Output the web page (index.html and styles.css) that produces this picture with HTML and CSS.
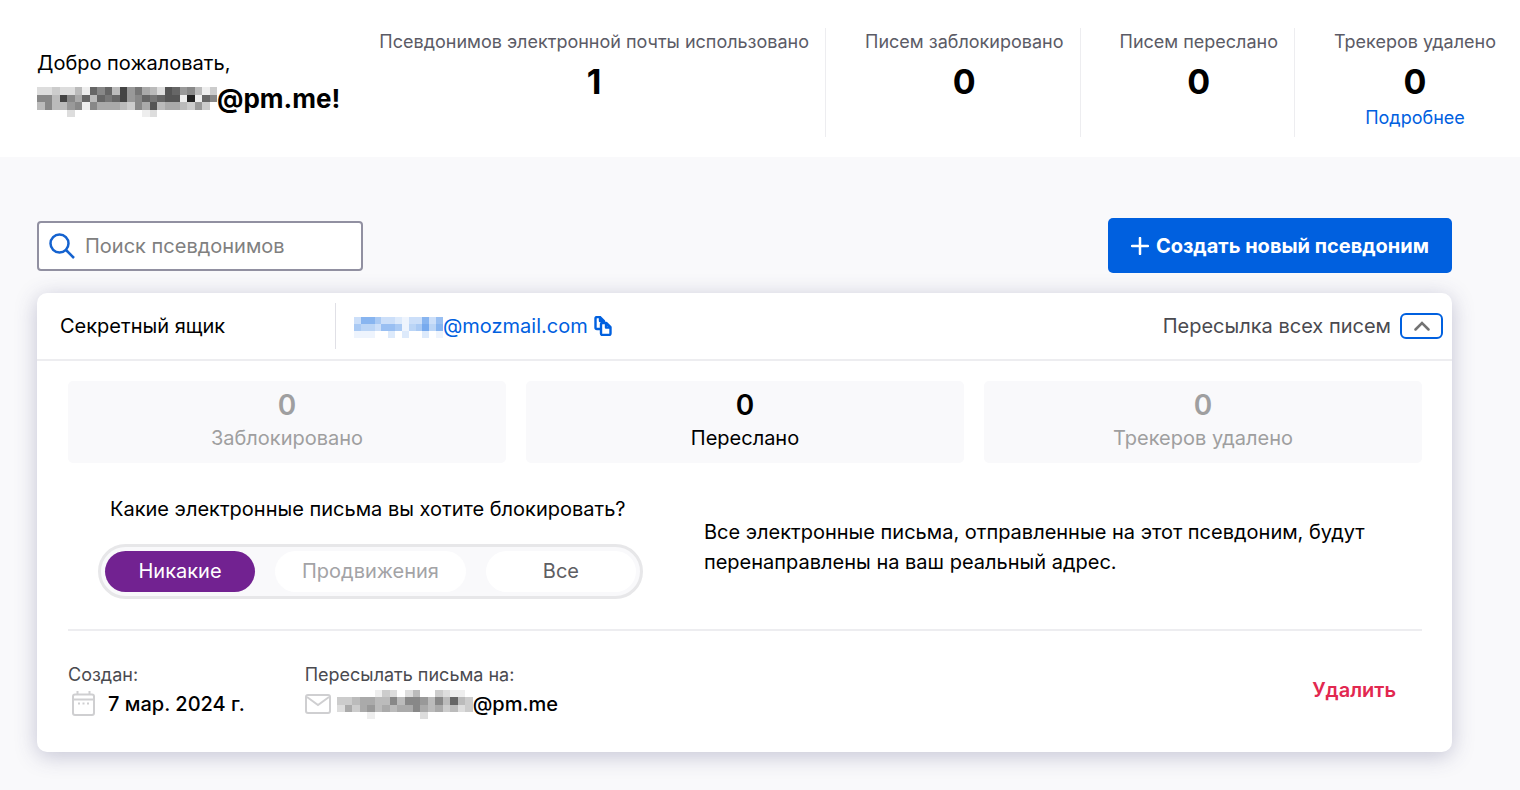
FILE: index.html
```html
<!DOCTYPE html>
<html lang="ru">
<head>
<meta charset="utf-8">
<meta name="viewport" content="width=device-width, initial-scale=1">
<title>Псевдонимы</title>
<link rel="stylesheet" href="styles.css">
</head>
<body>
<header class="top">
  <div class="welcome">
    <p class="hello">Добро пожаловать,</p>
    <p class="account"><svg class="mask mask-account" data-rows="ddcddbe686b497abd5698bec 88b48a6b67649867655e2e68 b8bb98e8aaabc8a5baabc9cf ffffdfffffffffedffffffff" aria-hidden="true"></svg><span>@pm.me!</span></p>
  </div>
  <dl class="totals">
    <div class="total"><dt>Псевдонимов электронной почты использовано</dt><dd>1</dd></div>
    <div class="total"><dt>Писем заблокировано</dt><dd>0</dd></div>
    <div class="total"><dt>Писем переслано</dt><dd>0</dd></div>
    <div class="total"><dt>Трекеров удалено</dt><dd>0</dd><dd class="more"><a href="#trackers">Подробнее</a></dd></div>
  </dl>
</header>
<main class="content">
  <div class="toolbar">
    <label class="search">
      <svg class="search-icon" viewBox="0 0 26 26" aria-hidden="true"><circle cx="10.500" cy="10.500" r="9"/><path d="M17 17l8 8"/></svg>
      <input type="search" placeholder="Поиск псевдонимов" aria-label="Поиск псевдонимов">
    </label>
    <button class="create" type="button">
      <svg viewBox="0 0 18 18" aria-hidden="true"><path d="M9 1v16M1 9h16"/></svg>
      Создать новый псевдоним
    </button>
  </div>
  <article class="card">
    <div class="card-head">
      <h2 class="label">Секретный ящик</h2>
      <div class="address">
        <button class="copy" type="button" aria-label="Скопировать адрес">
          <svg class="mask mask-alias" data-rows="c88accdecc8c9 abbc99aeba7b8 eeeffdfdffdfe" aria-hidden="true"></svg>
          <span>@mozmail.com</span>
          <svg class="copy-icon" viewBox="0 0 18 20" aria-hidden="true"><path d="M6 13H3a1.500 1.500 0 0 1-1.500-1.500v-9A1.500 1.500 0 0 1 3 1h3l4 4v2M6 1v4h4M8.500 7h4l4 4v6.500a1.500 1.500 0 0 1-1.500 1.500H8.500A1.500 1.500 0 0 1 7 17.500v-9A1.500 1.500 0 0 1 8.500 7zM12 7v4.500h4.500"/></svg>
        </button>
      </div>
      <span class="state">Пересылка всех писем</span>
      <button class="toggle" type="button" aria-expanded="true" aria-label="Свернуть">
        <svg viewBox="0 0 16 10" aria-hidden="true"><path d="M1.500 8.500L8 2l6.500 6.500"/></svg>
      </button>
    </div>
    <div class="card-body">
      <dl class="stats">
        <div class="stat muted"><dt>Заблокировано</dt><dd>0</dd></div>
        <div class="stat"><dt>Переслано</dt><dd>0</dd></div>
        <div class="stat muted"><dt>Трекеров удалено</dt><dd>0</dd></div>
      </dl>
      <div class="blocking">
        <fieldset class="levels">
          <legend>Какие электронные письма вы хотите блокировать?</legend>
          <div class="pills">
            <label class="pill"><input type="radio" name="level" checked><span>Никакие</span></label>
            <label class="pill"><input type="radio" name="level" disabled><span>Продвижения</span></label>
            <label class="pill"><input type="radio" name="level"><span>Все</span></label>
          </div>
        </fieldset>
        <p class="explain">Все электронные письма, отправленные на этот псевдоним, будут перенаправлены на ваш реальный адрес.</p>
      </div>
      <footer class="card-foot">
        <dl class="meta">
          <div><dt>Создан:</dt><dd class="date"><svg class="meta-icon" viewBox="0 0 26 26" aria-hidden="true"><rect x="3" y="3.500" width="21" height="20.500" rx="2"/><path d="M3 8.500h21M7.500 0v4M19.500 0v4"/><path d="M8 12.500h2M12.500 12.500h2M17 12.500h2"/></svg><span>7 мар. 2024 г.</span></dd></div>
          <div><dt>Пересылать письма на:</dt><dd><svg class="meta-icon" viewBox="0 0 26 26" aria-hidden="true"><rect x="1" y="4" width="24" height="18" rx="2"/><path d="M2 6l11 8 11-8"/></svg><svg class="mask mask-target" data-rows="fffffecdfdbffcdeef ccbaabb8b889b8b6bc daca9babaa8abacbdc ffffeffffffdffffff" aria-hidden="true"></svg><span>@pm.me</span></dd></div>
        </dl>
        <button class="delete" type="button">Удалить</button>
      </footer>
    </div>
  </article>
</main>
<script src="mask.js"></script>
</body>
</html>
```

FILE: styles.css
```css
* { box-sizing: border-box; }

body {
  margin: 0;
  min-height: 100vh;
  background: #f9f9fb;
  color: #000;
  font-family: Inter, "Liberation Sans", sans-serif;
  font-size: 20px;
  line-height: 30px;
}

p, h2, dl, dd, fieldset { margin: 0; padding: 0; }
fieldset { border: 0; min-width: 0; }
button, input { font: inherit; }
button { cursor: pointer; }
svg { flex: none; fill: none; }

.mask { display: block; }
.mask-account { width: 180px; height: 30px; margin-top: 6px; }
.mask-alias { width: 89px; height: 21px; margin-top: 2px; color: #0060df; }
.mask-target { width: 136px; height: 29px; }

.top {
  display: flex;
  justify-content: space-between;
  align-items: center;
  padding: 28px 24px 20px 37px;
  background: #fff;
}
.hello { line-height: 32px; }
.account {
  display: flex;
  align-items: center;
  font-size: 26px;
  font-weight: 700;
  line-height: 40px;
}
.totals { display: flex; text-align: center; }
.total {
  min-height: 109px;
  padding: 0 16px 0 39px;
  border-right: 1px solid #ededf0;
}
.total:last-child { padding-right: 0; border-right: 0; }
.total dt { color: #5b5b66; font-size: 18px; line-height: 28px; white-space: nowrap; }
.total dd { font-size: 34px; font-weight: 700; line-height: 52px; }
.total .more { font-size: 18px; font-weight: 400; line-height: 20px; }
.more a { color: #0060df; text-decoration: none; }

.content { padding: 61px 68px 37px 37px; }
.toolbar {
  display: flex;
  justify-content: space-between;
  align-items: center;
  margin-bottom: 20px;
}
.search {
  display: flex;
  align-items: center;
  gap: 10px;
  width: 326px;
  height: 50px;
  padding: 0 10px;
  background: #fff;
  border: 2px solid #9190a1;
  border-radius: 4px;
}
.search-icon { width: 26px; height: 26px; stroke: #1462cf; stroke-width: 2.5; }
.search input {
  flex: 1;
  min-width: 0;
  padding: 0;
  border: 0;
  outline: 0;
  background: none;
}
.search input::placeholder { color: #808080; }
.create {
  display: flex;
  align-items: center;
  gap: 7px;
  height: 55px;
  padding: 0 23px;
  border: 0;
  border-radius: 5px;
  background: #0060df;
  color: #fff;
  font-weight: 700;
}
.create svg { width: 18px; height: 18px; stroke: #fff; stroke-width: 2.5; stroke-linecap: round; }

.card {
  background: #fff;
  border-radius: 10px;
  box-shadow: 0 4px 22px rgba(58, 57, 110, 0.28);
}
.card-head {
  display: flex;
  align-items: center;
  padding: 10px 9px 10px 23px;
  border-bottom: 2px solid #ededf0;
}
.label { flex: 0 0 275px; font-size: 20px; font-weight: 400; }
.address { flex: 1; padding: 8px 0 8px 18px; border-left: 1px solid #e0e0e6; }
.copy {
  display: flex;
  align-items: center;
  padding: 0;
  border: 0;
  background: none;
  color: #0060df;
}
.copy-icon { width: 18px; height: 20px; margin-left: 6px; stroke: currentColor; stroke-width: 2.4; stroke-linejoin: round; }
.state { margin-right: 9px; color: #4a4a4f; }
.toggle {
  display: flex;
  justify-content: center;
  align-items: center;
  width: 43px;
  height: 26px;
  padding: 0;
  border: 2px solid #0060df;
  border-radius: 6px;
  background: #fff;
}
.toggle svg { width: 16px; height: 10px; stroke: #737373; stroke-width: 2.5; stroke-linecap: round; }

.card-body { padding: 20px 30px 33px 31px; }
.stats { display: grid; grid-template-columns: repeat(3, 1fr); gap: 20px; }
.stat {
  display: flex;
  flex-direction: column-reverse;
  padding: 8px 0;
  border-radius: 5px;
  background: #f9f9fb;
  text-align: center;
}
.stat dt { line-height: 33px; }
.stat dd { font-size: 28px; font-weight: 600; line-height: 33px; }
.stat.muted { color: #9f9fa0; }

.blocking {
  display: flex;
  align-items: center;
  gap: 61px;
  padding: 31px 30px 30px;
  border-bottom: 2px solid #ededf0;
}
.levels legend { padding: 0 12px; }
.pills {
  display: flex;
  gap: 20px;
  margin-top: 20px;
  padding: 4px;
  border: 3px solid #e7e7e9;
  border-radius: 28px;
  background: #f9f9fb;
}
.pill input { position: absolute; opacity: 0; }
.pill span {
  display: block;
  min-width: 150px;
  padding: 0 27px;
  border-radius: 21px;
  background: #fff;
  color: #5e5e63;
  line-height: 41px;
  text-align: center;
}
.pill input:disabled + span { color: #a3a3a6; }
.pill input:checked + span { background: #722291; color: #fff; }
.explain { flex: 1; }

.card-foot { display: flex; justify-content: space-between; align-items: center; padding: 30px 26px 0 0; }
.meta { display: flex; gap: 60px; }
.meta dt { color: #4a4a4f; font-size: 18px; line-height: 28px; }
.meta dd { display: flex; align-items: center; font-weight: 500; }
.meta-icon { width: 26px; height: 26px; margin-right: 6px; stroke: #cfcfd1; stroke-width: 2; }
.date .meta-icon { margin: 0 12px 0 2px; }
.delete { padding: 0; border: 0; background: none; color: #e22850; font-weight: 600; }
```

FILE: mask.js
```js
// Fills each mask with a mosaic; a hex digit per cell, 0 = solid, f = clear.
document.querySelectorAll(".mask").forEach((svg) => {
  const rows = svg.dataset.rows.split(" ");
  const columns = rows[0].length;
  svg.setAttribute("viewBox", `0 0 ${columns} ${rows.length}`);
  svg.setAttribute("preserveAspectRatio", "none");
  svg.setAttribute("shape-rendering", "crispEdges");
  rows.forEach((row, y) => {
    [...row].forEach((digit, x) => {
      const cell = document.createElementNS("http://www.w3.org/2000/svg", "rect");
      cell.setAttribute("x", x);
      cell.setAttribute("y", y);
      cell.setAttribute("width", 1);
      cell.setAttribute("height", 1);
      cell.setAttribute("fill", "currentColor");
      cell.setAttribute("fill-opacity", (15 - parseInt(digit, 16)) / 15);
      svg.appendChild(cell);
    });
  });
});
```
